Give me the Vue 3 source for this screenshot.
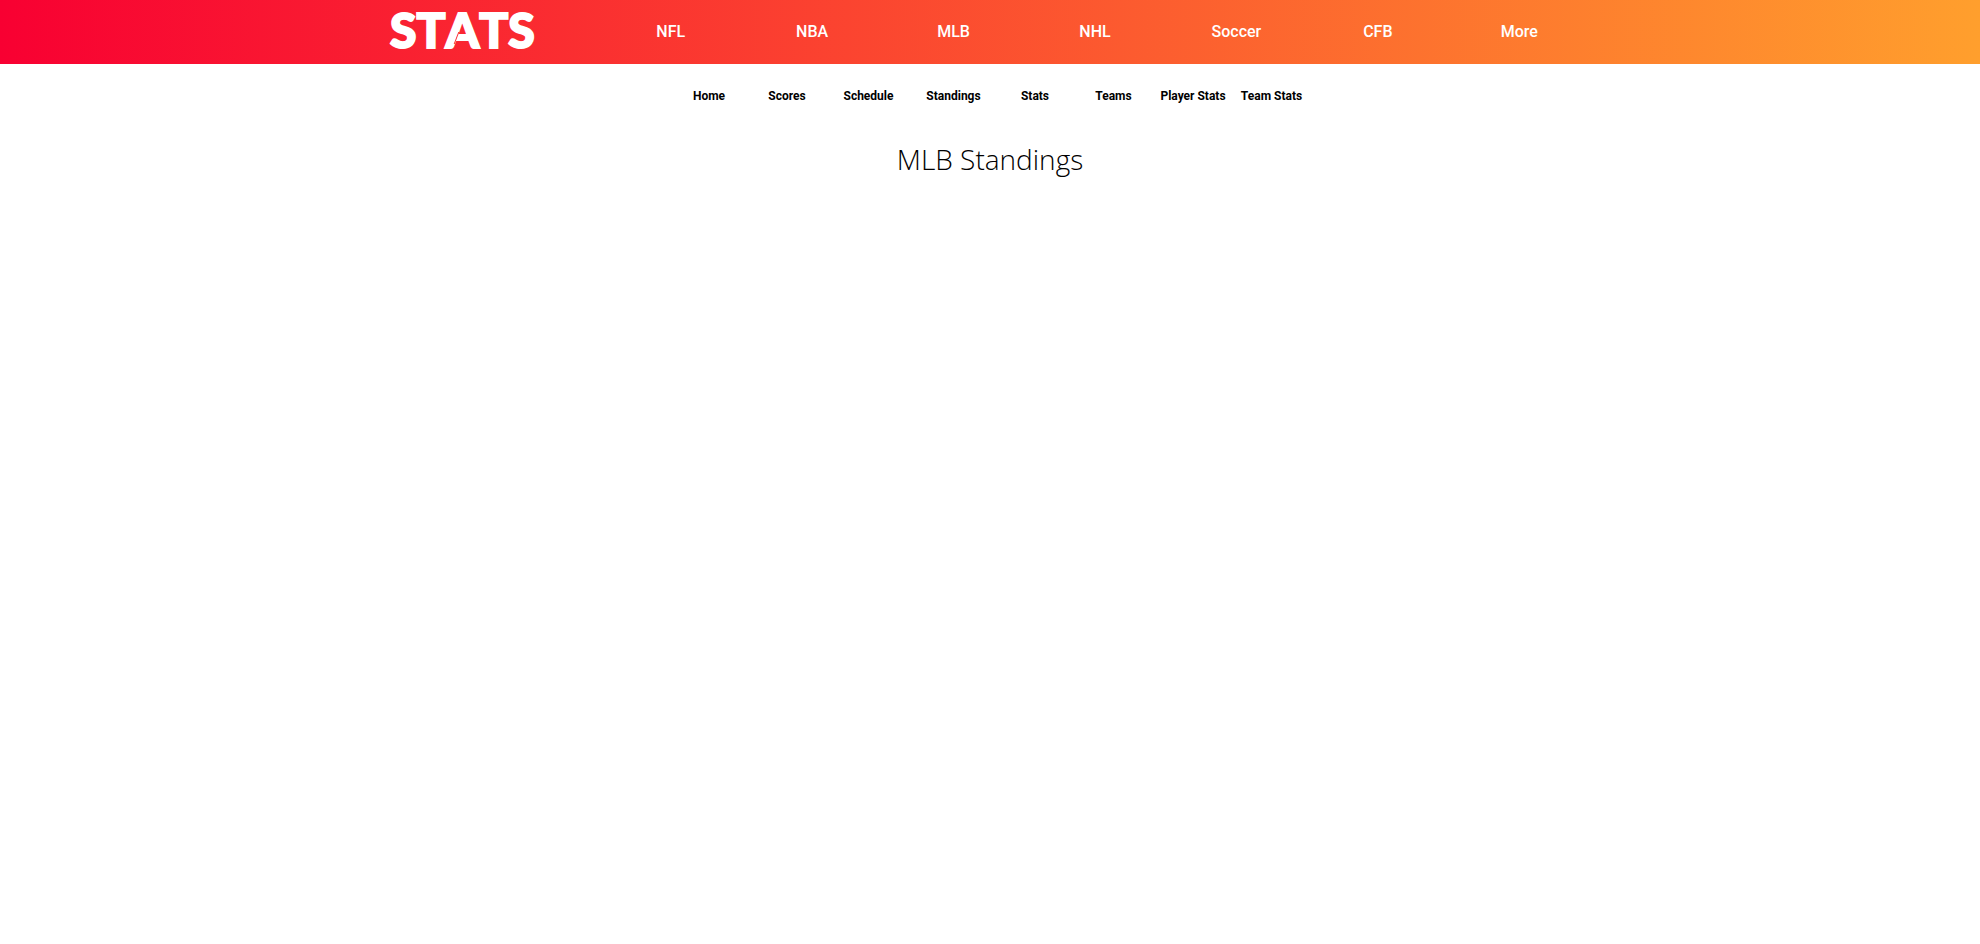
<script setup>
const leagues = ['NFL', 'NBA', 'MLB', 'NHL', 'Soccer', 'CFB', 'More']
const sections = ['Home', 'Scores', 'Schedule', 'Standings', 'Stats', 'Teams', 'Player Stats', 'Team Stats']
</script>

<template>
  <header class="topbar">
    <div class="topbar-inner">
      <a class="logo" href="#">ST<span class="logo-cut">A</span>TS</a>
      <nav class="leagues" aria-label="Leagues">
        <a v-for="league in leagues" :key="league" href="#">{{ league }}</a>
      </nav>
    </div>
  </header>
  <nav class="sections" aria-label="MLB sections">
    <a v-for="section in sections" :key="section" href="#">{{ section }}</a>
  </nav>
  <main>
    <h1>MLB Standings</h1>
  </main>
</template>

<style>
body {
  margin: 0;
  background: #fff;
}
</style>

<style scoped>
.topbar {
  background: linear-gradient(to right, #f80032, #ff9f2d);
}
.topbar-inner {
  display: flex;
  align-items: center;
  max-width: 1200px;
  height: 64px;
  margin: 0 auto;
}
a {
  color: inherit;
  text-decoration: none;
}
.logo {
  flex: 0 0 210px;
  padding-bottom: 4px;
  color: #fff;
  font: 900 48px/60px Lato, sans-serif;
  font-kerning: none;
  -webkit-text-stroke: 2px #fff;
}
.logo-cut {
  position: relative;
}
/* Stencil gap between the left leg of the A and its crossbar */
.logo-cut::after {
  position: absolute;
  bottom: 14px;
  left: 11px;
  width: 1px;
  height: 12px;
  background: #fb2a33;
  content: "";
  transform: skewX(-21deg);
}
.leagues {
  display: grid;
  flex: 1;
  grid-template-columns: repeat(7, 1fr);
  color: #fff;
  font: 500 16px/24px Roboto, sans-serif;
  text-align: center;
}
.sections {
  display: grid;
  grid-template-columns: 78fr 78fr 85fr 85fr 78fr 79fr 80fr 77fr;
  max-width: 640px;
  margin: 24px auto 0;
  color: #000;
  font: 700 12px/16px Roboto, sans-serif;
  text-align: center;
}
h1 {
  margin: 35px 0 0;
  color: #000;
  font: 300 28px/40px "Open Sans", sans-serif;
  text-align: center;
}
</style>
